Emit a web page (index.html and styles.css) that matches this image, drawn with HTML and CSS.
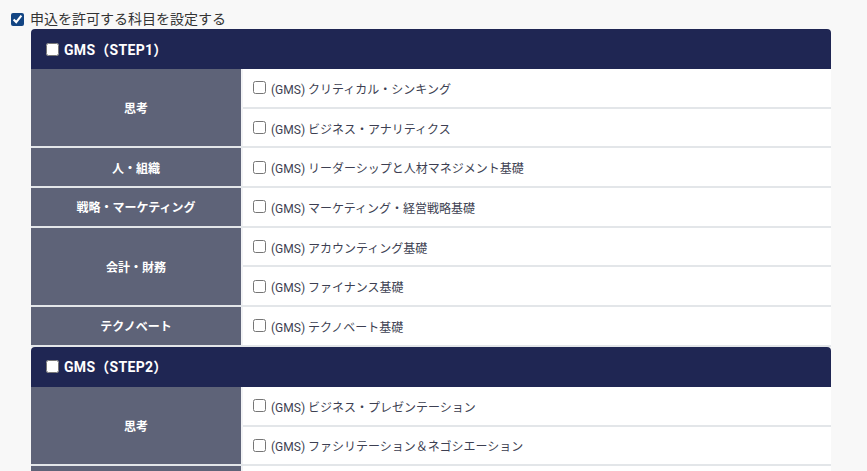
FILE: index.html
```html
<!DOCTYPE html>
<html lang="ja">
<head>
<meta charset="utf-8">
<link rel="stylesheet" href="styles.css">
</head>
<body>
<label class="top-row"><input type="checkbox" class="cb cb-top" checked><span>申込を許可する科目を設定する</span></label>
<div class="board">
  <section class="step">
    <div class="step-head"><input type="checkbox" class="cb"><span>GMS（STEP1）</span></div>
    <div class="group">
      <div class="cat">思考</div>
      <div class="items">
        <label class="item"><input type="checkbox" class="cb"><span>(GMS) クリティカル・シンキング</span></label>
        <label class="item"><input type="checkbox" class="cb"><span>(GMS) ビジネス・アナリティクス</span></label>
      </div>
    </div>
    <div class="group">
      <div class="cat">人・組織</div>
      <div class="items">
        <label class="item"><input type="checkbox" class="cb"><span>(GMS) リーダーシップと人材マネジメント基礎</span></label>
      </div>
    </div>
    <div class="group">
      <div class="cat">戦略・マーケティング</div>
      <div class="items">
        <label class="item"><input type="checkbox" class="cb"><span>(GMS) マーケティング・経営戦略基礎</span></label>
      </div>
    </div>
    <div class="group">
      <div class="cat">会計・財務</div>
      <div class="items">
        <label class="item"><input type="checkbox" class="cb"><span>(GMS) アカウンティング基礎</span></label>
        <label class="item"><input type="checkbox" class="cb"><span>(GMS) ファイナンス基礎</span></label>
      </div>
    </div>
    <div class="group">
      <div class="cat">テクノベート</div>
      <div class="items">
        <label class="item"><input type="checkbox" class="cb"><span>(GMS) テクノベート基礎</span></label>
      </div>
    </div>
  </section>
  <section class="step">
    <div class="step-head"><input type="checkbox" class="cb"><span>GMS（STEP2）</span></div>
    <div class="group">
      <div class="cat">思考</div>
      <div class="items">
        <label class="item"><input type="checkbox" class="cb"><span>(GMS) ビジネス・プレゼンテーション</span></label>
        <label class="item"><input type="checkbox" class="cb"><span>(GMS) ファシリテーション＆ネゴシエーション</span></label>
      </div>
    </div>
    <div class="group">
      <div class="cat"></div>
      <div class="items">
        <div class="item"></div>
      </div>
    </div>
  </section>
</div>
</body>
</html>
```
FILE: styles.css
```css
html, body {
  margin: 0;
  padding: 0;
  background: #f8f8f8;
  font-family: "Roboto", "Noto Sans CJK JP", sans-serif;
  color: #333;
  overflow: hidden;
  height: 471px;
}
.cb {
  width: 13px;
  height: 13px;
  margin: 0;
  flex: none;
  accent-color: #1a5fb4;
}
.top-row {
  display: flex;
  align-items: center;
  gap: 6px;
  padding: 10px 0 0 11px;
  height: 19px;
  font-size: 14px;
  line-height: 14px;
  color: #333;
}
.top-row span { margin-top: -1px; }
.board {
  width: 800px;
  margin-left: 31px;
}
.step-head {
  display: flex;
  align-items: center;
  gap: 5px;
  height: 40px;
  padding-left: 15px;
  background: #1f2653;
  border-radius: 4px 4px 0 0;
  color: #fff;
  font-size: 14px;
  font-weight: 700;
  letter-spacing: 0.3px;
}
.step-head span { margin-top: -1px; }
.group {
  display: flex;
  border-bottom: 2px solid #e3e6e9;
}
.cat {
  width: 210px;
  flex: none;
  display: flex;
  align-items: center;
  justify-content: center;
  background: #5e6378;
  color: #fff;
  font-size: 12px;
  font-weight: 700;
  border-right: 2px solid #f2f3f5;
}
.items {
  flex: 1;
  display: flex;
  flex-direction: column;
  background: #fff;
}
.item {
  display: flex;
  align-items: center;
  gap: 5px;
  height: 37.7px;
  padding-left: 10px;
  font-size: 12px;
  color: #3d3f52;
  border-bottom: 2px solid #e3e6e9;
}
.item:last-child { border-bottom: none; }
.item span { margin-top: 1px; }
```
